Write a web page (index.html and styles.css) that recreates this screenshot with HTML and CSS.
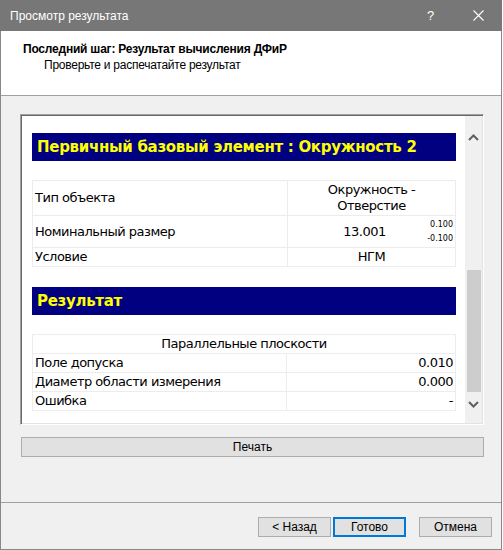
FILE: index.html
```html
<!DOCTYPE html>
<html lang="ru">
<head>
<meta charset="utf-8">
<title>Просмотр результата</title>
<link rel="stylesheet" href="styles.css">
</head>
<body>
<div class="window">
  <div class="titlebar">
    <span class="title">Просмотр результата</span>
    <span class="help">?</span>
    <span class="close"><svg width="11" height="11" viewBox="0 0 11 11"><path d="M0.5 0.5 L10.5 10.5 M10.5 0.5 L0.5 10.5" stroke="#fff" stroke-width="1.1" fill="none"/></svg></span>
  </div>
  <div class="header">
    <div class="h-title">Последний шаг: Результат вычисления ДФиР</div>
    <div class="h-sub">Проверьте и распечатайте результат</div>
  </div>
  <div class="body">
    <div class="panel">
      <div class="content">
        <div class="sect">Первичный базовый элемент : Окружность 2</div>
        <table class="grid t1">
          <tr class="r1"><td class="lbl">Тип объекта</td><td class="val c">Окружность -<br>Отверстие</td></tr>
          <tr class="r2"><td class="lbl">Номинальный размер</td><td class="val"><div class="nom"><span class="num">13.001</span><span class="tol"><span>0.100</span><span>-0.100</span></span></div></td></tr>
          <tr class="r3"><td class="lbl">Условие</td><td class="val c">НГМ</td></tr>
        </table>
        <div class="sect s2">Результат</div>
        <table class="grid t2">
          <tr><td colspan="2" class="c">Параллельные плоскости</td></tr>
          <tr><td class="lbl2">Поле допуска</td><td class="r">0.010</td></tr>
          <tr><td class="lbl2">Диаметр области измерения</td><td class="r">0.000</td></tr>
          <tr><td class="lbl2">Ошибка</td><td class="r">-</td></tr>
        </table>
      </div>
      <div class="scrollbar">
        <div class="sb-up"><svg width="11" height="7" viewBox="0 0 11 7"><path d="M1 6 L5.5 1.5 L10 6" stroke="#606060" stroke-width="2" fill="none"/></svg></div>
        <div class="sb-track"><div class="sb-thumb"></div></div>
        <div class="sb-down"><svg width="11" height="7" viewBox="0 0 11 7"><path d="M1 1 L5.5 5.5 L10 1" stroke="#606060" stroke-width="2" fill="none"/></svg></div>
      </div>
    </div>
    <div class="print">Печать</div>
  </div>
  <div class="footer">
    <div class="btn">&lt; Назад</div>
    <div class="btn default">Готово</div>
    <div class="btn cancel">Отмена</div>
  </div>
</div>
</body>
</html>
```
FILE: styles.css
```css
html, body { margin: 0; padding: 0; background: #ffffff; }
.window {
  width: 502px; height: 550px; box-sizing: border-box;
  border: 1px solid #888888; border-top: none;
  background: #f0f0f0;
  display: flex; flex-direction: column;
  font-family: "Liberation Sans", Arial, sans-serif; font-size: 12px; color: #000;
}
.titlebar {
  height: 31px; background: #777777; color: #ffffff;
  display: flex; align-items: center; flex-shrink: 0;
  margin: 0 -1px;
}
.title { padding-left: 10px; font-size: 12px; flex: 1; }
.help { width: 10px; margin-right: 36px; font-size: 13px; }
.close { width: 11px; margin-right: 18px; display: flex; }
.header {
  background: #ffffff; border-bottom: 1px solid #a0a0a0;
  flex-shrink: 0; padding: 10px 0 0 22px; height: 54px;
}
.h-title { font-weight: bold; font-size: 12px; line-height: 16px; letter-spacing: -0.22px; }
.h-sub { padding-left: 21px; line-height: 16px; letter-spacing: -0.25px; }
.body { flex: 1; padding: 18px 17px 0 19px; display: flex; flex-direction: column; }
.panel {
  height: 311px; box-sizing: border-box; display: flex;
  border: 1px solid; border-color: #a0a0a0 #ffffff #ffffff #a0a0a0;
  box-shadow: inset 1px 1px 0 #696969, inset -1px -1px 0 #e3e3e3;
  padding: 1px;
}
.content {
  flex: 1; background: #ffffff; padding: 17px 9px 0 10px;
  font-family: "DejaVu Sans", Verdana, sans-serif; font-size: 13px; letter-spacing: -0.5px;
}
.sect {
  background: #000080; color: #ffff00; font-weight: bold; font-size: 15px;
  height: 28px; line-height: 28px; padding-left: 5px; letter-spacing: -0.3px;
}
.s2 { margin-top: 20px; }
.grid { width: 100%; border-collapse: collapse; margin-top: 19px; }
.grid td { border: 1px solid #ececec; padding: 1px 2px; line-height: 16px; vertical-align: middle; }
.t1 .lbl { width: 250px; }
.t2 .lbl2 { width: 249px; }
.c { text-align: center; }
.r { text-align: right; }
.r2 td { height: 29px; }
.nom { display: flex; align-items: center; }
.num { flex: 1; text-align: center; padding-left: 16px; }
.tol { display: flex; flex-direction: column; align-items: flex-end; font-size: 8px; line-height: 14px; width: 30px; letter-spacing: 0; }
.scrollbar { width: 17px; background: #f0f0f0; display: flex; flex-direction: column; }
.sb-up { height: 42px; display: flex; justify-content: center; align-items: center; }
.sb-track { height: 234px; padding-top: 112px; box-sizing: border-box; }
.sb-thumb { height: 122px; background: #cdcdcd; margin: 0 1px 0 2px; }
.sb-down { height: 31px; display: flex; justify-content: center; padding-top: 9px; box-sizing: border-box; }
.print {
  margin-top: 12px; margin-left: 1px; height: 20px; box-sizing: border-box;
  background: #e1e1e1; border: 1px solid #adadad; text-align: center; line-height: 18px;
}
.footer {
  height: 47px; box-sizing: border-box; border-top: 1px solid #a0a0a0; flex-shrink: 0;
  display: flex; justify-content: flex-end; align-items: flex-start;
  padding: 14px 9px 0 0;
}
.btn {
  width: 73px; height: 20px; box-sizing: border-box; background: #e1e1e1;
  border: 1px solid #adadad; text-align: center; line-height: 18px;
}
.default { border: 2px solid #0078d7; line-height: 16px; margin-left: 2px; }
.cancel { margin-left: 13px; }
```
